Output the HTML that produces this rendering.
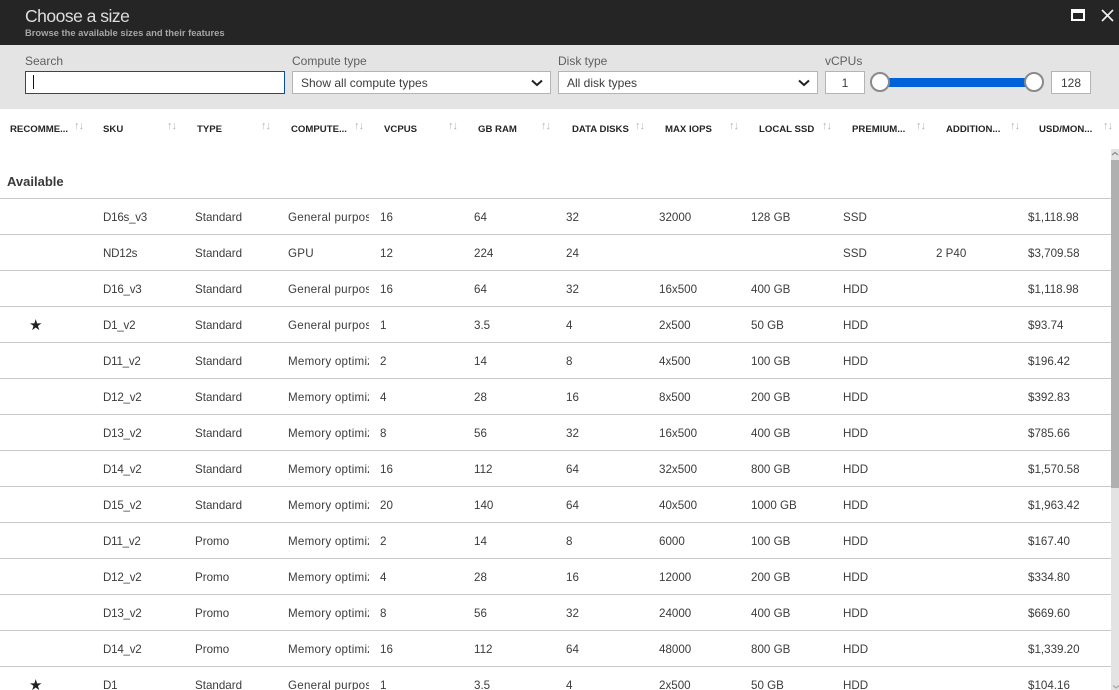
<!DOCTYPE html>
<html><head><meta charset="utf-8"><style>
html,body{margin:0;padding:0;background:#fff}
#p{position:relative;width:1119px;height:690px;overflow:hidden;font-family:"Liberation Sans",sans-serif;font-size:12px;color:#3c3c3c;background:#fff}
#p div,#p span{position:absolute;white-space:nowrap}
.bar{left:0;top:0;width:1119px;height:45px;background:#252525}
.flt{left:0;top:45px;width:1119px;height:64px;background:#e4e4e4}
.lb{top:54px;font-size:12px;line-height:14px;color:#5f5f5f}
.box{background:#fff;border:1px solid #b4b4b4;box-sizing:border-box;height:23px;top:71px;line-height:22px;font-size:12px;color:#3c3c3c}
.h{top:124px;font-size:9.6px;line-height:12px;font-weight:bold;color:#252525}
.ar{top:120px;font-size:11px;line-height:12px;color:#b5b5b5;letter-spacing:-1px}
.r{left:0;width:1111px;height:36px;border-top:1px solid #c8c8c8;box-sizing:border-box;font-size:11.6px}
.r span{top:11px;line-height:15px}
.a{left:103px;letter-spacing:-.25px}.b{left:195px}.c{left:288px;width:81px;overflow:hidden;letter-spacing:.25px}.d{left:380px}.e{left:474px}.f{left:566px}.g{left:659px}.i{left:751px}.j{left:843px}.k{left:936px}.l{left:1028px}
.r .st{left:29px;font-size:15px;color:#222;top:11px}
</style></head><body><div id="p">
<div class="bar"></div>
<div style="left:25px;top:5px;font-size:17.5px;line-height:22px;color:#dedede;letter-spacing:-.5px">Choose a size</div>
<div style="left:25px;top:26px;font-size:9.4px;line-height:13px;font-weight:bold;color:#a6a6a6">Browse the available sizes and their features</div>
<svg style="position:absolute;left:1071px;top:9px" width="14" height="12"><rect x="1" y="1" width="12" height="10" fill="none" stroke="#fff" stroke-width="2"/><rect x="0" y="0" width="14" height="4" fill="#fff"/></svg>
<svg style="position:absolute;left:1101px;top:9px" width="13" height="13"><path d="M1 1L12 12M12 1L1 12" stroke="#f2f2f2" stroke-width="1.6" fill="none"/></svg>
<div class="flt"></div>
<div class="lb" style="left:25px">Search</div>
<div class="lb" style="left:292px">Compute type</div>
<div class="lb" style="left:558px">Disk type</div>
<div class="lb" style="left:825px">vCPUs</div>
<div class="box" style="left:25px;width:260px;border-color:#0a4f9e"></div>
<div style="left:33px;top:75px;width:1px;height:14px;background:#111"></div>
<div class="box" style="left:292px;width:259px;padding-left:8px">Show all compute types</div>
<svg style="position:absolute;left:531px;top:79px" width="12" height="8"><path d="M1 1.5L6 6L11 1.5" stroke="#222" stroke-width="2" fill="none"/></svg>
<div class="box" style="left:558px;width:260px;padding-left:8px">All disk types</div>
<svg style="position:absolute;left:798px;top:79px" width="12" height="8"><path d="M1 1.5L6 6L11 1.5" stroke="#222" stroke-width="2" fill="none"/></svg>
<div class="box" style="left:825px;width:40px;text-align:center">1</div>
<div class="box" style="left:1051px;width:40px;text-align:center">128</div>
<div style="left:884px;top:78px;width:146px;height:9px;background:#0062d9"></div>
<div style="left:870px;top:72px;width:20px;height:20px;box-sizing:border-box;border:2px solid #8a8a8a;border-radius:50%;background:#fff"></div>
<div style="left:1024px;top:72px;width:20px;height:20px;box-sizing:border-box;border:2px solid #8a8a8a;border-radius:50%;background:#fff"></div>

<div class="h" style="left:10px">RECOMME...</div><span class="ar" style="left:74px">↑↓</span>
<div class="h" style="left:103px">SKU</div><span class="ar" style="left:167px">↑↓</span>
<div class="h" style="left:197px">TYPE</div><span class="ar" style="left:261px">↑↓</span>
<div class="h" style="left:291px">COMPUTE...</div><span class="ar" style="left:354px">↑↓</span>
<div class="h" style="left:384px">VCPUS</div><span class="ar" style="left:448px">↑↓</span>
<div class="h" style="left:478px">GB RAM</div><span class="ar" style="left:541px">↑↓</span>
<div class="h" style="left:572px">DATA DISKS</div><span class="ar" style="left:635px">↑↓</span>
<div class="h" style="left:665px">MAX IOPS</div><span class="ar" style="left:729px">↑↓</span>
<div class="h" style="left:759px">LOCAL SSD</div><span class="ar" style="left:822px">↑↓</span>
<div class="h" style="left:852px">PREMIUM...</div><span class="ar" style="left:916px">↑↓</span>
<div class="h" style="left:946px">ADDITION...</div><span class="ar" style="left:1010px">↑↓</span>
<div class="h" style="left:1039px">USD/MON...</div><span class="ar" style="left:1103px">↑↓</span>

<div style="left:7px;top:174px;font-size:13px;line-height:16px;font-weight:bold;color:#3a3a3a">Available</div>

<div class="r" style="top:198px"><span class="a">D16s_v3</span><span class="b">Standard</span><span class="c">General purpose</span><span class="d">16</span><span class="e">64</span><span class="f">32</span><span class="g">32000</span><span class="i">128 GB</span><span class="j">SSD</span><span class="l">$1,118.98</span></div>
<div class="r" style="top:234px"><span class="a">ND12s</span><span class="b">Standard</span><span class="c">GPU</span><span class="d">12</span><span class="e">224</span><span class="f">24</span><span class="j">SSD</span><span class="k">2 P40</span><span class="l">$3,709.58</span></div>
<div class="r" style="top:270px"><span class="a">D16_v3</span><span class="b">Standard</span><span class="c">General purpose</span><span class="d">16</span><span class="e">64</span><span class="f">32</span><span class="g">16x500</span><span class="i">400 GB</span><span class="j">HDD</span><span class="l">$1,118.98</span></div>
<div class="r" style="top:306px"><span class="st">★</span><span class="a">D1_v2</span><span class="b">Standard</span><span class="c">General purpose</span><span class="d">1</span><span class="e">3.5</span><span class="f">4</span><span class="g">2x500</span><span class="i">50 GB</span><span class="j">HDD</span><span class="l">$93.74</span></div>
<div class="r" style="top:342px"><span class="a">D11_v2</span><span class="b">Standard</span><span class="c">Memory optimized</span><span class="d">2</span><span class="e">14</span><span class="f">8</span><span class="g">4x500</span><span class="i">100 GB</span><span class="j">HDD</span><span class="l">$196.42</span></div>
<div class="r" style="top:378px"><span class="a">D12_v2</span><span class="b">Standard</span><span class="c">Memory optimized</span><span class="d">4</span><span class="e">28</span><span class="f">16</span><span class="g">8x500</span><span class="i">200 GB</span><span class="j">HDD</span><span class="l">$392.83</span></div>
<div class="r" style="top:414px"><span class="a">D13_v2</span><span class="b">Standard</span><span class="c">Memory optimized</span><span class="d">8</span><span class="e">56</span><span class="f">32</span><span class="g">16x500</span><span class="i">400 GB</span><span class="j">HDD</span><span class="l">$785.66</span></div>
<div class="r" style="top:450px"><span class="a">D14_v2</span><span class="b">Standard</span><span class="c">Memory optimized</span><span class="d">16</span><span class="e">112</span><span class="f">64</span><span class="g">32x500</span><span class="i">800 GB</span><span class="j">HDD</span><span class="l">$1,570.58</span></div>
<div class="r" style="top:486px"><span class="a">D15_v2</span><span class="b">Standard</span><span class="c">Memory optimized</span><span class="d">20</span><span class="e">140</span><span class="f">64</span><span class="g">40x500</span><span class="i">1000 GB</span><span class="j">HDD</span><span class="l">$1,963.42</span></div>
<div class="r" style="top:522px"><span class="a">D11_v2</span><span class="b">Promo</span><span class="c">Memory optimized</span><span class="d">2</span><span class="e">14</span><span class="f">8</span><span class="g">6000</span><span class="i">100 GB</span><span class="j">HDD</span><span class="l">$167.40</span></div>
<div class="r" style="top:558px"><span class="a">D12_v2</span><span class="b">Promo</span><span class="c">Memory optimized</span><span class="d">4</span><span class="e">28</span><span class="f">16</span><span class="g">12000</span><span class="i">200 GB</span><span class="j">HDD</span><span class="l">$334.80</span></div>
<div class="r" style="top:594px"><span class="a">D13_v2</span><span class="b">Promo</span><span class="c">Memory optimized</span><span class="d">8</span><span class="e">56</span><span class="f">32</span><span class="g">24000</span><span class="i">400 GB</span><span class="j">HDD</span><span class="l">$669.60</span></div>
<div class="r" style="top:630px"><span class="a">D14_v2</span><span class="b">Promo</span><span class="c">Memory optimized</span><span class="d">16</span><span class="e">112</span><span class="f">64</span><span class="g">48000</span><span class="i">800 GB</span><span class="j">HDD</span><span class="l">$1,339.20</span></div>
<div class="r" style="top:666px"><span class="st">★</span><span class="a">D1</span><span class="b">Standard</span><span class="c">General purpose</span><span class="d">1</span><span class="e">3.5</span><span class="f">4</span><span class="g">2x500</span><span class="i">50 GB</span><span class="j">HDD</span><span class="l">$104.16</span></div>

<div style="left:1111px;top:149px;width:8px;height:541px;background:#e3e3e3"></div>
<div style="left:1111px;top:160px;width:8px;height:328px;background:#b0b0b0"></div>
<svg style="position:absolute;left:1111px;top:151px" width="8" height="6"><path d="M1 4L4 1.5L7 4" stroke="#8f8f8f" stroke-width="1.3" fill="none"/></svg>
<svg style="position:absolute;left:1113px;top:685px" width="6" height="5"><path d="M0 0.5L3 3L6 0.5" stroke="#a5a5a5" stroke-width="1.2" fill="none"/></svg>
</div></body></html>
